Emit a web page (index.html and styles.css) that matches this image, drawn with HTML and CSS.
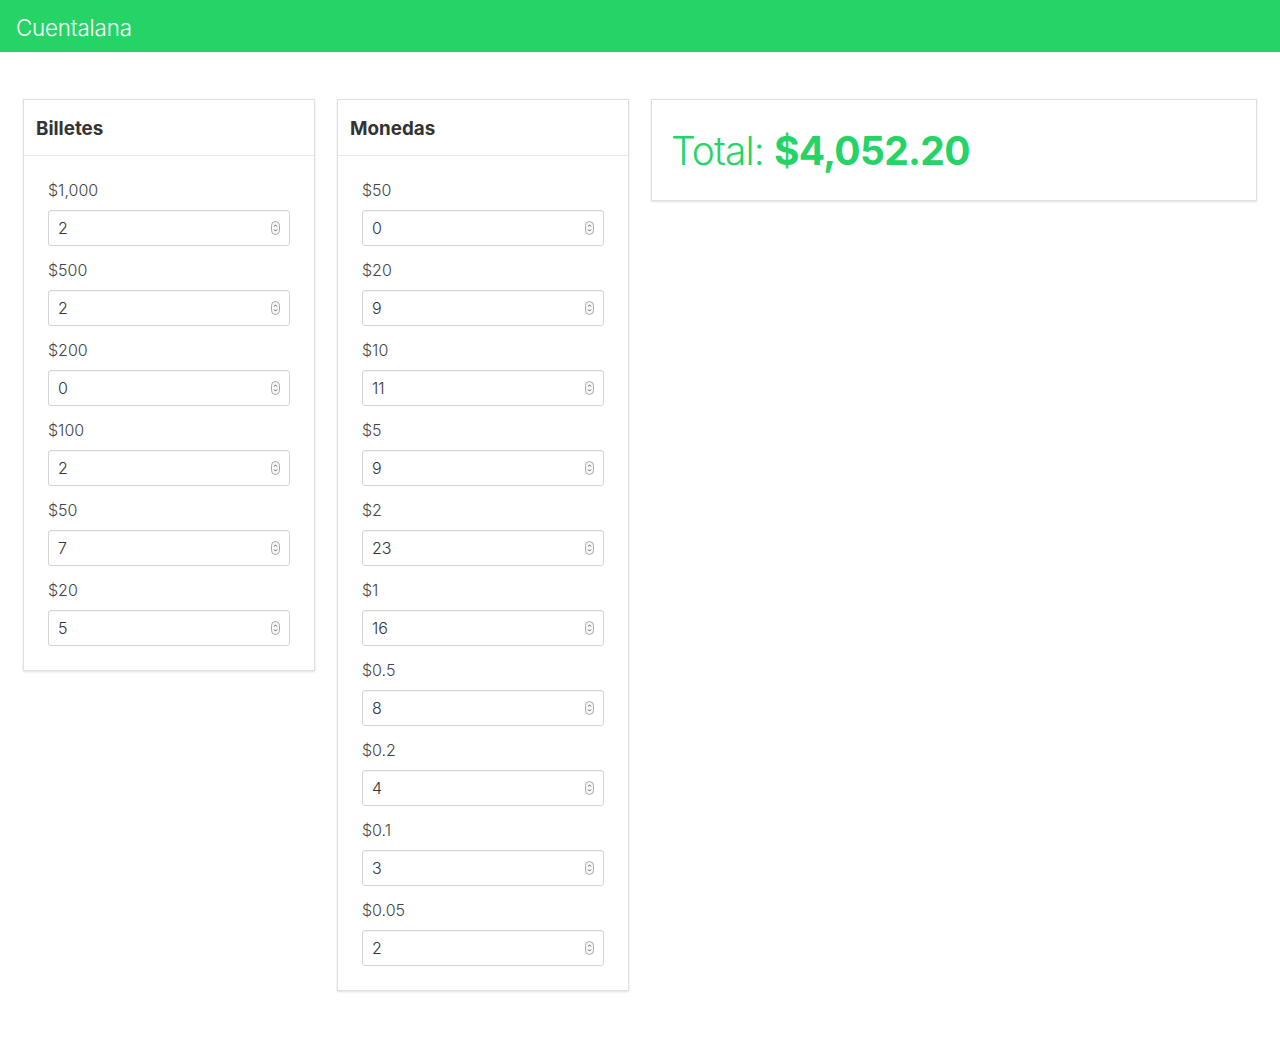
FILE: index.html
```html
<!DOCTYPE html>
<html lang="es">
<head>
<meta charset="utf-8">
<title>Cuentalana</title>
<link rel="stylesheet" href="styles.css">
</head>
<body>
<nav class="navbar"><span class="brand">Cuentalana</span></nav>
<main class="layout">
  <section class="card">
    <header class="card-header">Billetes</header>
    <div class="card-body">
      <div class="field"><label>$1,000</label><div class="input-wrap"><input class="num" type="text" value="2" readonly><span class="spin"><svg viewBox="0 0 8 14"><path d="M2.3 5.2 4 3.5 5.7 5.2M2.3 8.8 4 10.5 5.7 8.8"/></svg></span></div></div>
      <div class="field"><label>$500</label><div class="input-wrap"><input class="num" type="text" value="2" readonly><span class="spin"><svg viewBox="0 0 8 14"><path d="M2.3 5.2 4 3.5 5.7 5.2M2.3 8.8 4 10.5 5.7 8.8"/></svg></span></div></div>
      <div class="field"><label>$200</label><div class="input-wrap"><input class="num" type="text" value="0" readonly><span class="spin"><svg viewBox="0 0 8 14"><path d="M2.3 5.2 4 3.5 5.7 5.2M2.3 8.8 4 10.5 5.7 8.8"/></svg></span></div></div>
      <div class="field"><label>$100</label><div class="input-wrap"><input class="num" type="text" value="2" readonly><span class="spin"><svg viewBox="0 0 8 14"><path d="M2.3 5.2 4 3.5 5.7 5.2M2.3 8.8 4 10.5 5.7 8.8"/></svg></span></div></div>
      <div class="field"><label>$50</label><div class="input-wrap"><input class="num" type="text" value="7" readonly><span class="spin"><svg viewBox="0 0 8 14"><path d="M2.3 5.2 4 3.5 5.7 5.2M2.3 8.8 4 10.5 5.7 8.8"/></svg></span></div></div>
      <div class="field"><label>$20</label><div class="input-wrap"><input class="num" type="text" value="5" readonly><span class="spin"><svg viewBox="0 0 8 14"><path d="M2.3 5.2 4 3.5 5.7 5.2M2.3 8.8 4 10.5 5.7 8.8"/></svg></span></div></div>
    </div>
  </section>
  <section class="card">
    <header class="card-header">Monedas</header>
    <div class="card-body">
      <div class="field"><label>$50</label><div class="input-wrap"><input class="num" type="text" value="0" readonly><span class="spin"><svg viewBox="0 0 8 14"><path d="M2.3 5.2 4 3.5 5.7 5.2M2.3 8.8 4 10.5 5.7 8.8"/></svg></span></div></div>
      <div class="field"><label>$20</label><div class="input-wrap"><input class="num" type="text" value="9" readonly><span class="spin"><svg viewBox="0 0 8 14"><path d="M2.3 5.2 4 3.5 5.7 5.2M2.3 8.8 4 10.5 5.7 8.8"/></svg></span></div></div>
      <div class="field"><label>$10</label><div class="input-wrap"><input class="num" type="text" value="11" readonly><span class="spin"><svg viewBox="0 0 8 14"><path d="M2.3 5.2 4 3.5 5.7 5.2M2.3 8.8 4 10.5 5.7 8.8"/></svg></span></div></div>
      <div class="field"><label>$5</label><div class="input-wrap"><input class="num" type="text" value="9" readonly><span class="spin"><svg viewBox="0 0 8 14"><path d="M2.3 5.2 4 3.5 5.7 5.2M2.3 8.8 4 10.5 5.7 8.8"/></svg></span></div></div>
      <div class="field"><label>$2</label><div class="input-wrap"><input class="num" type="text" value="23" readonly><span class="spin"><svg viewBox="0 0 8 14"><path d="M2.3 5.2 4 3.5 5.7 5.2M2.3 8.8 4 10.5 5.7 8.8"/></svg></span></div></div>
      <div class="field"><label>$1</label><div class="input-wrap"><input class="num" type="text" value="16" readonly><span class="spin"><svg viewBox="0 0 8 14"><path d="M2.3 5.2 4 3.5 5.7 5.2M2.3 8.8 4 10.5 5.7 8.8"/></svg></span></div></div>
      <div class="field"><label>$0.5</label><div class="input-wrap"><input class="num" type="text" value="8" readonly><span class="spin"><svg viewBox="0 0 8 14"><path d="M2.3 5.2 4 3.5 5.7 5.2M2.3 8.8 4 10.5 5.7 8.8"/></svg></span></div></div>
      <div class="field"><label>$0.2</label><div class="input-wrap"><input class="num" type="text" value="4" readonly><span class="spin"><svg viewBox="0 0 8 14"><path d="M2.3 5.2 4 3.5 5.7 5.2M2.3 8.8 4 10.5 5.7 8.8"/></svg></span></div></div>
      <div class="field"><label>$0.1</label><div class="input-wrap"><input class="num" type="text" value="3" readonly><span class="spin"><svg viewBox="0 0 8 14"><path d="M2.3 5.2 4 3.5 5.7 5.2M2.3 8.8 4 10.5 5.7 8.8"/></svg></span></div></div>
      <div class="field"><label>$0.05</label><div class="input-wrap"><input class="num" type="text" value="2" readonly><span class="spin"><svg viewBox="0 0 8 14"><path d="M2.3 5.2 4 3.5 5.7 5.2M2.3 8.8 4 10.5 5.7 8.8"/></svg></span></div></div>
    </div>
  </section>
  <section class="card total-card">
    <div class="total">Total: <strong>$4,052.20</strong></div>
  </section>
</main>
</body>
</html>
```
FILE: styles.css
```css
* { box-sizing: border-box; }
html, body { margin: 0; padding: 0; background: #fff; }
body { font-family: Inter, "Liberation Sans", sans-serif; color: #444; }

.navbar {
  height: 52px;
  background: #25d366;
  display: flex;
  align-items: center;
  padding: 0 16px;
}
.brand {
  color: #fff;
  font-size: 22.4px;
  font-weight: 300;
  letter-spacing: -0.2px;
  position: relative;
  top: 1px;
}

.layout {
  display: grid;
  grid-template-columns: 292px 292px 606px;
  gap: 22px;
  padding: 47px 23px;
  align-items: start;
}

.card {
  border: 1px solid #e0e0e0;
  background: #fff;
  box-shadow: 0 1px 2px rgba(0,0,0,0.12);
}
.card-header {
  height: 56px;
  display: flex;
  align-items: center;
  padding: 2px 12px 0;
  font-size: 18.8px;
  font-weight: 700;
  color: #333;
  border-bottom: 1px solid #e8e8e8;
}
.card-body {
  padding: 24px;
  display: flex;
  flex-direction: column;
  gap: 14px;
}
.field { display: flex; flex-direction: column; gap: 10px; }
.field label {
  font-size: 16px;
  line-height: 20px;
  font-weight: 300;
  color: #444;
}
.input-wrap { position: relative; }
.num {
  width: 100%;
  height: 36px;
  border: 1px solid #d4d4d4;
  border-radius: 3px;
  padding: 0 9px;
  font-family: inherit;
  font-size: 16px;
  font-weight: 300;
  color: #333;
  background: #fff;
  box-shadow: inset 0 1px 1px rgba(0,0,0,0.04);
  outline: none;
}
.spin {
  position: absolute;
  right: 10px;
  top: 11px;
  width: 9px;
  height: 14px;
  border: 1px solid #aaa;
  border-radius: 4.5px;
  background: #f7f7f7;
  display: flex;
}
.spin svg {
  width: 100%;
  height: 100%;
  fill: none;
  stroke: #444;
  stroke-width: 1;
}

.total-card { padding: 25px 20px 23px 19px; }
.total {
  font-size: 39px;
  line-height: 52px;
  font-weight: 300;
  color: #25d366;
  letter-spacing: -0.9px;
}
.total strong { font-weight: 700; letter-spacing: -0.7px; }
```
